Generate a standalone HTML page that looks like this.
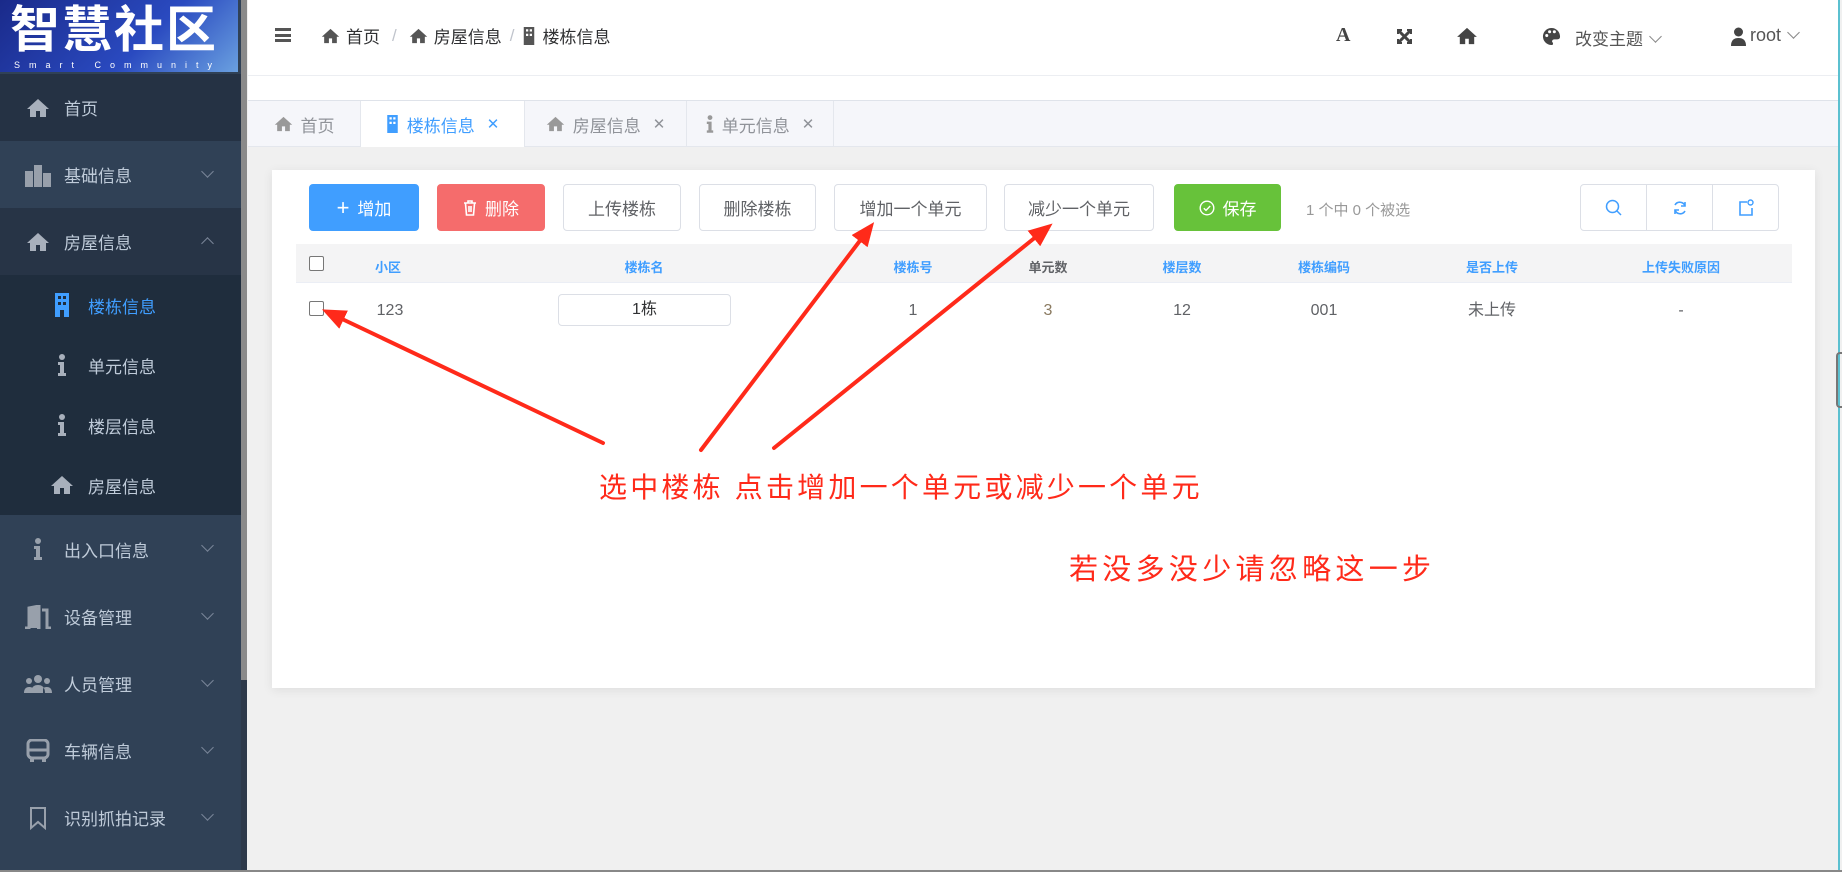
<!DOCTYPE html>
<html><head><meta charset="utf-8">
<style>
*{margin:0;padding:0;box-sizing:border-box}
body{width:1842px;height:872px;overflow:hidden;background:#f0f0f0;font-family:"Liberation Sans","Noto Sans CJK SC",sans-serif;position:relative;color:#606266}
.abs{position:absolute}
#side{left:0;top:0;width:243px;height:872px;background:#304156}
#logo{left:0;top:0;width:238px;height:72px;background:linear-gradient(135deg,#1a2a8a,#2a4ac0 60%,#6aa0e0);color:#fff;font-size:50px;font-weight:bold;letter-spacing:2px;line-height:60px;padding-left:10px;overflow:hidden}
#logo small{position:absolute;left:14px;top:60px;font-size:9px;letter-spacing:9px;line-height:10px;font-weight:normal}
.mi{position:absolute;left:0;width:243px;height:67px;color:#bfcbd9;font-size:17px;display:flex;align-items:center}
.mi .ic{width:28px;margin-left:24px;margin-right:12px;display:flex;justify-content:center}
.mi .ar{position:absolute;left:203px;top:26px;width:9px;height:9px;border-right:1.5px solid #7a8699;border-bottom:1.5px solid #7a8699;transform:rotate(45deg)}
.mi .up{transform:rotate(-135deg);top:31px}
.sub{background:#1f2d3d;height:60px}
.sub .ic{margin-left:48px}
#sb{left:241px;top:0;width:6px;height:680px;background:#8a8a8a}
#sb2{left:241px;top:680px;width:6px;height:192px;background:#2e3a4b}
#hdr{left:248px;top:0;width:1590px;height:76px;background:#fff;border-bottom:1px solid #eceef2}
#band{left:248px;top:76px;width:1590px;height:24px;background:#fff}
#tabs{left:248px;top:100px;width:1590px;height:47px;background:#f5f6fa;border-top:1px solid #dfe3ea;border-bottom:1px solid #e4e7ed}
.tab{position:absolute;top:0;height:46px;display:flex;align-items:center;justify-content:center;font-size:17px;color:#909399;border-right:1px solid #e4e7ed;gap:8px}
.tab.on{background:#fff;color:#409eff}
.x{font-size:15px;margin-left:4px}
#card{left:272px;top:170px;width:1543px;height:518px;background:#fff;box-shadow:0 2px 10px rgba(0,0,0,.08)}
.btn{position:absolute;top:184px;height:47px;border:1px solid #dcdfe6;border-radius:4px;background:#fff;font-size:17px;color:#606266;display:flex;align-items:center;justify-content:center;gap:8px}
.hd{position:absolute;top:244px;left:296px;width:1496px;height:39px;background:#f4f4f5;border-bottom:1px solid #ebeef5}
.hc{position:absolute;top:257px;font-size:13px;color:#409eff;font-weight:bold;transform:translateX(-50%)}
.dc{position:absolute;top:302px;font-size:16px;line-height:18px;color:#606266;transform:translateX(-50%)}
.cb{position:absolute;width:15px;height:15px;border:1px solid #777;border-radius:2px;background:#fff}
.red{color:#ff2a1a;position:absolute;font-family:"Liberation Sans","Noto Sans CJK SC",sans-serif;white-space:nowrap}
.chev{display:inline-block;width:9px;height:9px;border-right:1.5px solid #888;border-bottom:1.5px solid #888;transform:rotate(45deg);margin-left:8px;position:relative;top:-4px}
</style></head><body>
<div id="side" class="abs"></div>
<div id="logo" class="abs">智慧社区<small>Smart Community</small></div>
<div class="mi" style="top:74px;background:#253244"><span class="ic"><svg width="24" height="20" viewBox="0 0 24 20"><path d="M12 1L1 11h3v8h6v-6h4v6h6v-8h3z" fill="#a8b0bc"/></svg></span>首页</div>
<div class="mi" style="top:141px;background:#304156"><span class="ic"><svg width="28" height="24" viewBox="0 0 28 24"><rect x="1" y="8" width="8" height="16" fill="#98a0ab"/><rect x="10" y="2" width="8" height="22" fill="#98a0ab"/><rect x="19" y="10" width="8" height="14" fill="#98a0ab"/></svg></span>基础信息<i class="ar"></i></div>
<div class="mi" style="top:208px;background:#273446"><span class="ic"><svg width="24" height="20" viewBox="0 0 24 20"><path d="M12 1L1 11h3v8h6v-6h4v6h6v-8h3z" fill="#a8b0bc"/></svg></span>房屋信息<i class="ar up"></i></div>
<div class="mi sub" style="top:275px;color:#409eff"><span class="ic"><svg width="16" height="24" viewBox="0 0 16 24"><rect x="1" y="0" width="14" height="24" fill="#409eff"/><rect x="4" y="3" width="3" height="3" fill="#1f2d3d"/><rect x="9" y="3" width="3" height="3" fill="#1f2d3d"/><rect x="4" y="9" width="3" height="3" fill="#1f2d3d"/><rect x="9" y="9" width="3" height="3" fill="#1f2d3d"/><rect x="6" y="17" width="4" height="7" fill="#1f2d3d"/></svg></span>楼栋信息</div>
<div class="mi sub" style="top:335px"><span class="ic"><svg width="10" height="22" viewBox="0 0 10 22"><circle cx="5" cy="3" r="3" fill="#a8b0bc"/><path d="M1 8h6v11h2v3H1v-3h2v-8H1z" fill="#a8b0bc"/></svg></span>单元信息</div>
<div class="mi sub" style="top:395px"><span class="ic"><svg width="10" height="22" viewBox="0 0 10 22"><circle cx="5" cy="3" r="3" fill="#a8b0bc"/><path d="M1 8h6v11h2v3H1v-3h2v-8H1z" fill="#a8b0bc"/></svg></span>楼层信息</div>
<div class="mi sub" style="top:455px"><span class="ic"><svg width="24" height="20" viewBox="0 0 24 20"><path d="M12 1L1 11h3v8h6v-6h4v6h6v-8h3z" fill="#a8b0bc"/></svg></span>房屋信息</div>
<div class="mi" style="top:515px;height:68px"><span class="ic"><svg width="10" height="22" viewBox="0 0 10 22"><circle cx="5" cy="3" r="3" fill="#98a0ab"/><path d="M1 8h6v11h2v3H1v-3h2v-8H1z" fill="#98a0ab"/></svg></span>出入口信息<i class="ar"></i></div>
<div class="mi" style="top:583px"><span class="ic"><svg width="28" height="24" viewBox="0 0 28 24"><path d="M1 23h4V3l10-2v22h-2M18 5h5v18h4" fill="none" stroke="#98a0ab" stroke-width="3"/><rect x="5" y="3" width="10" height="20" fill="#98a0ab"/></svg></span>设备管理<i class="ar"></i></div>
<div class="mi" style="top:650px"><span class="ic"><svg width="28" height="20" viewBox="0 0 28 20"><circle cx="14" cy="5" r="4" fill="#98a0ab"/><circle cx="5" cy="7" r="3" fill="#98a0ab"/><circle cx="23" cy="7" r="3" fill="#98a0ab"/><path d="M7 19c0-6 3-8 7-8s7 2 7 8zM0 19c0-4 2-6 5-6s4 1 4 3v3zM28 19c0-4-2-6-5-6s-4 1-4 3v3z" fill="#98a0ab"/></svg></span>人员管理<i class="ar"></i></div>
<div class="mi" style="top:717px"><span class="ic"><svg width="24" height="24" viewBox="0 0 24 24"><rect x="2" y="1" width="20" height="18" rx="4" fill="none" stroke="#98a0ab" stroke-width="3"/><path d="M2 11h20" stroke="#98a0ab" stroke-width="3"/><rect x="4" y="18" width="4" height="5" fill="#98a0ab"/><rect x="16" y="18" width="4" height="5" fill="#98a0ab"/></svg></span>车辆信息<i class="ar"></i></div>
<div class="mi" style="top:784px"><span class="ic"><svg width="18" height="24" viewBox="0 0 18 24"><path d="M2 2h14v20l-7-6-7 6z" fill="none" stroke="#98a0ab" stroke-width="2"/></svg></span>识别抓拍记录<i class="ar"></i></div>
<div id="sb" class="abs"></div><div id="sb2" class="abs"></div>

<div id="hdr" class="abs"></div>
<div id="band" class="abs"></div>
<div class="abs" style="left:275px;top:28px;width:16px;height:14px;border-top:3px solid #555;border-bottom:3px solid #555"><div style="margin-top:2.5px;height:3px;background:#555"></div></div>
<div class="abs" style="left:321px;top:23px;font-size:17px;color:#303133;display:flex;align-items:center;gap:6px">
<svg width="19" height="16" viewBox="0 0 24 20"><path d="M12 1L1 11h3v8h6v-6h4v6h6v-8h3z" fill="#555"/></svg>首页<span style="color:#c0c4cc;margin:0 6px">/</span>
<svg width="19" height="16" viewBox="0 0 24 20"><path d="M12 1L1 11h3v8h6v-6h4v6h6v-8h3z" fill="#555"/></svg>房屋信息<span style="color:#c0c4cc;margin:0 2px">/</span>
<svg width="14" height="18" viewBox="0 0 16 24"><rect x="1" y="0" width="14" height="24" fill="#555"/><rect x="4" y="3" width="3" height="3" fill="#fff"/><rect x="9" y="3" width="3" height="3" fill="#fff"/><rect x="4" y="9" width="3" height="3" fill="#fff"/><rect x="9" y="9" width="3" height="3" fill="#fff"/></svg>楼栋信息</div>
<div class="abs" style="left:1336px;top:24px;font-size:20px;font-weight:bold;color:#444;font-family:'Liberation Serif',serif">A</div>
<svg class="abs" style="left:1396px;top:28px" width="17" height="17" viewBox="0 0 17 17"><path d="M2 2l13 13M15 2L2 15" stroke="#444" stroke-width="3"/><path d="M1 1h5v2H3v3H1zM16 1h-5v2h3v3h2zM1 16h5v-2H3v-3H1zM16 16h-5v-2h3v-3h2z" fill="#444"/></svg>
<svg class="abs" style="left:1456px;top:27px" width="22" height="18" viewBox="0 0 24 20"><path d="M12 1L1 11h3v8h6v-6h4v6h6v-8h3z" fill="#444"/></svg>
<svg class="abs" style="left:1542px;top:27px" width="19" height="19" viewBox="0 0 20 20"><path d="M10 1a9 9 0 1 0 0 18c2 0 2-2 1-3s0-3 2-3h3c2 0 3-1 3-3 0-5-4-9-9-9z" fill="#444"/><circle cx="5" cy="9" r="1.6" fill="#fff"/><circle cx="8" cy="5" r="1.6" fill="#fff"/><circle cx="13" cy="5" r="1.6" fill="#fff"/></svg>
<div class="abs" style="left:1575px;top:25px;font-size:17px;color:#555">改变主题<i class="chev"></i></div>
<svg class="abs" style="left:1731px;top:27px" width="15" height="19" viewBox="0 0 15 19"><circle cx="7.5" cy="5" r="4.5" fill="#444"/><path d="M0 19c0-6 3-8 7.5-8S15 13 15 19z" fill="#444"/></svg>
<div class="abs" style="left:1750px;top:25px;font-size:18px;color:#555">root<i class="chev"></i></div>
<div class="abs" style="left:1838px;top:0;width:2px;height:872px;background:#5bc0d0"></div>
<div class="abs" style="left:1836px;top:352px;width:6px;height:56px;border:2px solid #777;border-right:none;border-radius:4px 0 0 4px"></div>

<div id="tabs" class="abs">
<div class="tab" style="left:0;width:113px"><svg width="19" height="16" viewBox="0 0 24 20"><path d="M12 1L1 11h3v8h6v-6h4v6h6v-8h3z" fill="#999"/></svg>首页</div>
<div class="tab on" style="left:113px;width:164px"><svg width="13" height="18" viewBox="0 0 16 24"><rect x="1" y="0" width="14" height="24" fill="#409eff"/><rect x="4" y="3" width="3" height="3" fill="#fff"/><rect x="9" y="3" width="3" height="3" fill="#fff"/><rect x="4" y="9" width="3" height="3" fill="#fff"/><rect x="9" y="9" width="3" height="3" fill="#fff"/></svg>楼栋信息<span class="x">✕</span></div>
<div class="tab" style="left:277px;width:162px"><svg width="19" height="16" viewBox="0 0 24 20"><path d="M12 1L1 11h3v8h6v-6h4v6h6v-8h3z" fill="#999"/></svg>房屋信息<span class="x">✕</span></div>
<div class="tab" style="left:439px;width:147px"><svg width="8" height="18" viewBox="0 0 10 22"><circle cx="5" cy="3" r="3" fill="#999"/><path d="M1 8h6v11h2v3H1v-3h2v-8H1z" fill="#999"/></svg>单元信息<span class="x">✕</span></div>
</div>

<div id="card" class="abs"></div>
<div class="btn" style="left:309px;width:110px;background:#409eff;border-color:#409eff;color:#fff"><span style="font-size:22px;font-weight:300">+</span> 增加</div>
<div class="btn" style="left:437px;width:108px;background:#f56c6c;border-color:#f56c6c;color:#fff"><svg width="14" height="16" viewBox="0 0 14 16"><path d="M1 3h12M5 3V1h4v2M2.5 3.5l1 11.5h7l1-11.5M6 6v6M8 6v6" fill="none" stroke="#fff" stroke-width="1.6"/></svg>删除</div>
<div class="btn" style="left:563px;width:118px">上传楼栋</div>
<div class="btn" style="left:699px;width:117px">删除楼栋</div>
<div class="btn" style="left:834px;width:153px">增加一个单元</div>
<div class="btn" style="left:1004px;width:150px">减少一个单元</div>
<div class="btn" style="left:1174px;width:107px;background:#67c23a;border-color:#67c23a;color:#fff"><svg width="16" height="16" viewBox="0 0 16 16"><circle cx="8" cy="8" r="6.8" fill="none" stroke="#fff" stroke-width="1.4"/><path d="M4.8 8.2l2.2 2.2 4.2-4.4" fill="none" stroke="#fff" stroke-width="1.4"/></svg>保存</div>
<div class="abs" style="left:1306px;top:199px;font-size:15px;color:#999">1 个中 0 个被选</div>
<div class="abs" style="left:1580px;top:184px;width:199px;height:47px;border:1px solid #dcdfe6;border-radius:4px;display:flex">
<div style="flex:1;border-right:1px solid #dcdfe6;display:flex;align-items:center;justify-content:center"><svg width="17" height="17" viewBox="0 0 17 17"><circle cx="7.5" cy="7.5" r="6" fill="none" stroke="#409eff" stroke-width="1.5"/><path d="M12 12l4 4" stroke="#409eff" stroke-width="1.5"/></svg></div>
<div style="flex:1;border-right:1px solid #dcdfe6;display:flex;align-items:center;justify-content:center"><svg width="16" height="16" viewBox="0 0 16 16"><path d="M13 6A5.5 5.5 0 0 0 3 5M3 10a5.5 5.5 0 0 0 10 1" fill="none" stroke="#409eff" stroke-width="1.6"/><path d="M13 2v4h-4M3 14v-4h4" fill="none" stroke="#409eff" stroke-width="1.6"/></svg></div>
<div style="flex:1;display:flex;align-items:center;justify-content:center"><svg width="16" height="17" viewBox="0 0 16 17"><path d="M9 3H2v13h12V9" fill="none" stroke="#409eff" stroke-width="1.6"/><circle cx="12.5" cy="3.5" r="2.5" fill="none" stroke="#409eff" stroke-width="1.4"/></svg></div>
</div>

<div class="hd"></div>
<div class="cb" style="left:309px;top:256px"></div>
<div class="hc" style="left:388px">小区</div>
<div class="hc" style="left:644px">楼栋名</div>
<div class="hc" style="left:913px">楼栋号</div>
<div class="hc" style="left:1048px;color:#606266">单元数</div>
<div class="hc" style="left:1182px">楼层数</div>
<div class="hc" style="left:1324px">楼栋编码</div>
<div class="hc" style="left:1492px">是否上传</div>
<div class="hc" style="left:1681px">上传失败原因</div>
<div class="cb" style="left:309px;top:301px"></div>
<div class="dc" style="left:390px">123</div>
<div class="abs" style="left:558px;top:294px;width:173px;height:32px;border:1px solid #dcdfe6;border-radius:4px;text-align:center;line-height:30px;font-size:16px;color:#303133">1栋</div>
<div class="dc" style="left:913px">1</div>
<div class="dc" style="left:1048px;color:#8a7a60">3</div>
<div class="dc" style="left:1182px">12</div>
<div class="dc" style="left:1324px">001</div>
<div class="dc" style="left:1492px">未上传</div>
<div class="dc" style="left:1681px">-</div>

<svg class="abs" style="left:0;top:0" width="1842" height="872">
<defs><marker id="ah" markerWidth="6" markerHeight="5" refX="1" refY="2.5" orient="auto"><path d="M0 0L6 2.5L0 5z" fill="#ff2a1a"/></marker></defs>
<g stroke="#ff2a1a" fill="none" stroke-linecap="round">
<path d="M603 443L340 318" stroke-width="4" marker-end="url(#ah)"/>
<path d="M701 450L862 238" stroke-width="4" marker-end="url(#ah)"/>
<path d="M774 448L1037 236" stroke-width="4" marker-end="url(#ah)"/>
</g>
</svg>
<div class="red" style="left:599px;top:466px;font-size:28px;letter-spacing:3.2px">选中楼栋 点击增加一个单元或减少一个单元</div>
<div class="red" style="left:1069px;top:546px;font-size:29px;letter-spacing:4.3px">若没多没少请忽略这一步</div>
<div class="abs" style="left:0;top:870px;width:1842px;height:2px;background:#888"></div>
</body></html>
